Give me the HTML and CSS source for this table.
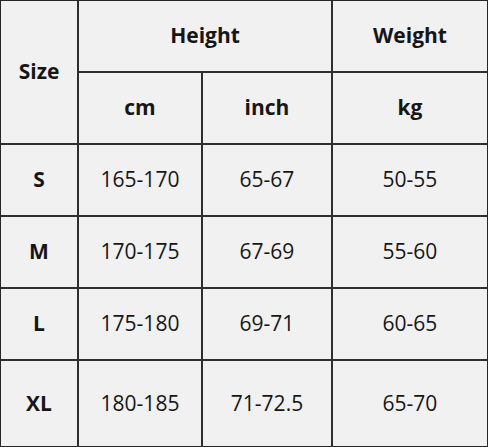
FILE: index.html
```html
<!DOCTYPE html>
<html>
<head>
<meta charset="utf-8">
<link rel="stylesheet" href="styles.css">
</head>
<body>
<div class="chart">
  <div class="cell head size">Size</div>
  <div class="cell head height">Height</div>
  <div class="cell head">Weight</div>
  <div class="cell head">cm</div>
  <div class="cell head">inch</div>
  <div class="cell head">kg</div>

  <div class="cell head">S</div>
  <div class="cell">165-170</div>
  <div class="cell">65-67</div>
  <div class="cell">50-55</div>

  <div class="cell head">M</div>
  <div class="cell">170-175</div>
  <div class="cell">67-69</div>
  <div class="cell">55-60</div>

  <div class="cell head">L</div>
  <div class="cell">175-180</div>
  <div class="cell">69-71</div>
  <div class="cell">60-65</div>

  <div class="cell head">XL</div>
  <div class="cell">180-185</div>
  <div class="cell">71-72.5</div>
  <div class="cell">65-70</div>
</div>
</body>
</html>
```
FILE: styles.css
```css
html, body {
  margin: 0;
  padding: 0;
  background: #f1f1f1;
}

.chart {
  width: 488px;
  height: 447px;
  box-sizing: border-box;
  border: 1px solid #262626;
  background: #2e2e2e;
  display: grid;
  grid-template-columns: 76px 122px 128px 154px;
  grid-template-rows: 70px 70px 70px 70px 70px 85px;
  gap: 2px;
  font-family: "Open Sans", "Noto Sans", sans-serif;
  font-size: 21px;
  color: #161616;
}

.cell {
  background: #f1f1f1;
  display: flex;
  align-items: center;
  justify-content: center;
  padding-bottom: 2px;
}

.head {
  font-weight: 700;
}

.size {
  grid-row: span 2;
}

.height {
  grid-column: span 2;
}
```
